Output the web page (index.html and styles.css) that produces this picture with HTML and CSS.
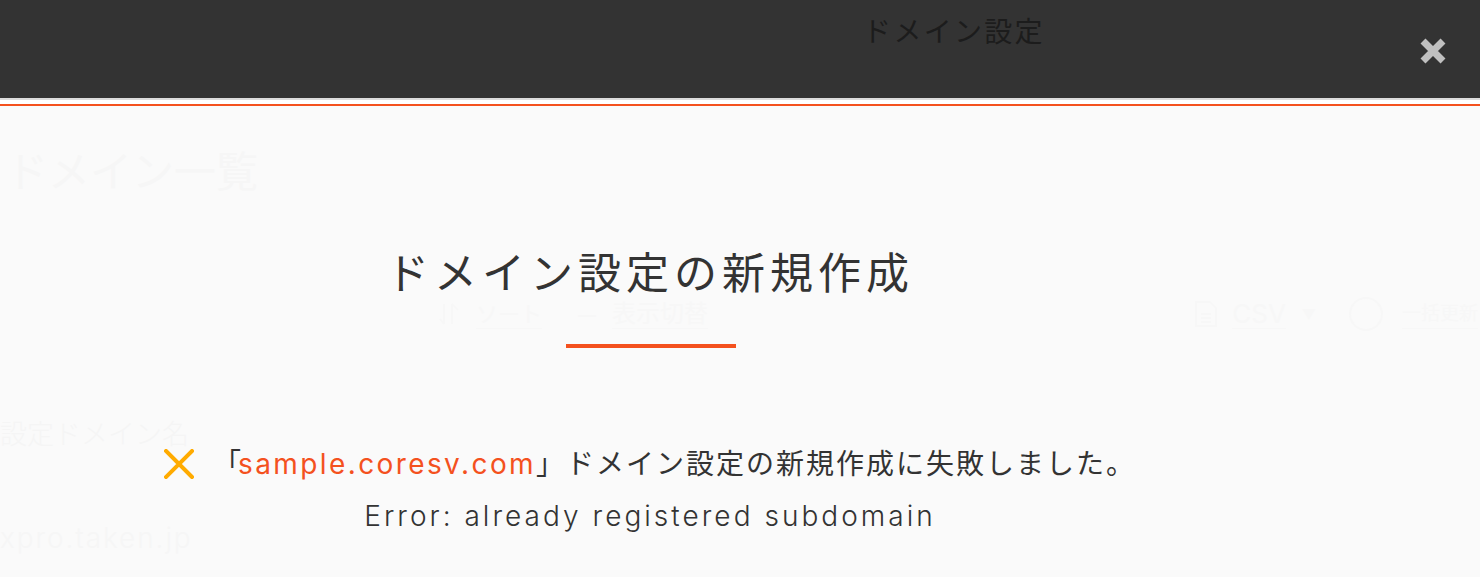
FILE: index.html
```html
<!DOCTYPE html>
<html lang="ja">
<head>
<meta charset="utf-8">
<title>ドメイン設定</title>
<link rel="stylesheet" href="styles.css">
</head>
<body>
<header class="topbar">
  <h1 class="topbar-title">ドメイン設定</h1>
  <button class="close" aria-label="閉じる">
    <svg width="30" height="30" viewBox="0 0 30 30"><path d="M5 5 25 25M25 5 5 25" class="close-x"/></svg>
  </button>
</header>
<div class="rule"></div>
<main class="page">
  <h2 class="ghost-heading">ドメイン一覧</h2>
  <div class="ghost-tools">
    <div class="ghost-group ghost-left">
      <svg class="ghost-icon" width="24" height="24" viewBox="0 0 24 24"><path d="M6 2V22M6 22 2 17M14 2V22M14 2 20 8"/></svg>
      <span class="ghost-link">ソート</span>
      <span class="ghost-dash">ー</span>
      <span class="ghost-link ghost-wide">表示切替</span>
    </div>
    <div class="ghost-group">
      <svg class="ghost-icon" width="24" height="28" viewBox="0 0 24 28"><path d="M2 2H16L22 8V26H2ZM7 14H17M7 18H17M7 22H17"/></svg>
      <span class="ghost-link ghost-csv">CSV</span>
      <span class="ghost-caret">▼</span>
      <svg class="ghost-icon ghost-circle" width="36" height="36" viewBox="0 0 36 36"><circle cx="18" cy="18" r="16"/></svg>
      <span class="ghost-link ghost-narrow">一括更新</span>
    </div>
  </div>
  <p class="ghost-label">設定ドメイン名</p>
  <p class="ghost-value">xpro.taken.jp</p>
  <section class="dialog">
    <h2 class="dialog-title">ドメイン設定の新規作成</h2>
    <div class="dialog-bar"></div>
    <p class="message">
      <svg class="fail" width="30" height="30" viewBox="0 0 30 30"><path d="M2 2 28 28M28 2 2 28"/></svg>
      <span class="message-text"><span class="bracket">「</span><span class="domain">sample.coresv.com</span>」ドメイン設定の新規作成に失敗しました。</span>
    </p>
    <p class="error">Error: already registered subdomain</p>
  </section>
</main>
</body>
</html>
```

FILE: styles.css
```css
* { box-sizing: border-box; }
html, body { margin: 0; height: 577px; overflow: hidden; }
body {
  background: #fafafa;
  color: #333;
  font-family: "Inter", "Noto Sans CJK JP", sans-serif;
}
.topbar {
  height: 98px;
  background: #333;
  display: flex;
  justify-content: center;
  position: relative;
}
.topbar-title {
  margin: 14px 0 0 428px;
  font-size: 28px;
  line-height: 36px;
  font-weight: 400;
  letter-spacing: 2.300px;
  color: #1c1c1c;
}
.close {
  position: absolute;
  right: 32px;
  top: 36px;
  width: 30px;
  height: 30px;
  padding: 0;
  border: 0;
  background: none;
}
.close svg { display: block; }
.close-x { stroke: #c0c0c0; stroke-width: 7; fill: none; }
.rule {
  height: 8px;
  background: #fff;
  border-top: 2px solid #dcdcdc;
  border-bottom: 2px solid #f4511e;
}
.page {
  position: relative;
  height: 471px;
  overflow: hidden;
}
.ghost-heading {
  margin: 42px 0 0 6px;
  font-size: 42px;
  line-height: 48px;
  font-weight: 400;
  color: #f6f6f6;
}
.ghost-tools {
  display: flex;
  justify-content: space-between;
  height: 36px;
  margin: 100px 2px 0 438px;
  font-size: 22px;
  color: #f7f7f7;
}
.ghost-group {
  display: flex;
  align-items: center;
}
.ghost-link {
  border-bottom: 1px solid #f7f7f7;
  line-height: 28px;
}
.ghost-wide { font-size: 24px; }
.ghost-csv { font-size: 26px; }
.ghost-narrow { font-size: 19px; }
.ghost-dash { margin: 0 14px 0 34px; }
.ghost-caret { margin: 0 32px 0 16px; font-size: 14px; }
.ghost-icon { fill: none; stroke: #f7f7f7; stroke-width: 2; margin-right: 14px; }
.ghost-circle { margin-right: 18px; }
.ghost-label {
  margin: 87px 0 0 0;
  font-size: 27px;
  line-height: 32px;
  font-weight: 300;
  color: #f5f5f5;
}
.ghost-value {
  margin: 71px 0 0 0;
  font-size: 28px;
  line-height: 32px;
  font-weight: 300;
  letter-spacing: 1.900px;
  color: #f6f6f6;
}
.dialog {
  position: absolute;
  inset: 0 0 auto 0;
  width: 1302px;
  display: flex;
  flex-direction: column;
  align-items: center;
}
.dialog-title {
  margin: 138px 2px 0 0;
  font-size: 43px;
  line-height: 58px;
  font-weight: 400;
  letter-spacing: 5px;
  color: #333;
}
.dialog-bar {
  width: 170px;
  height: 4px;
  margin-top: 42px;
  background: #f4511e;
}
.message {
  display: flex;
  align-items: center;
  gap: 19px;
  margin: 94px 2px 0 0;
  font-size: 28px;
  line-height: 44px;
  letter-spacing: 2px;
}
.fail path { stroke: #ffab00; stroke-width: 4; fill: none; stroke-linecap: square; }
.bracket { letter-spacing: -3px; }
.domain { color: #f4511e; letter-spacing: 2.400px; }
.error {
  margin: 8px 2px 0 0;
  font-size: 28px;
  line-height: 44px;
  font-weight: 300;
  letter-spacing: 3.030px;
}
```
